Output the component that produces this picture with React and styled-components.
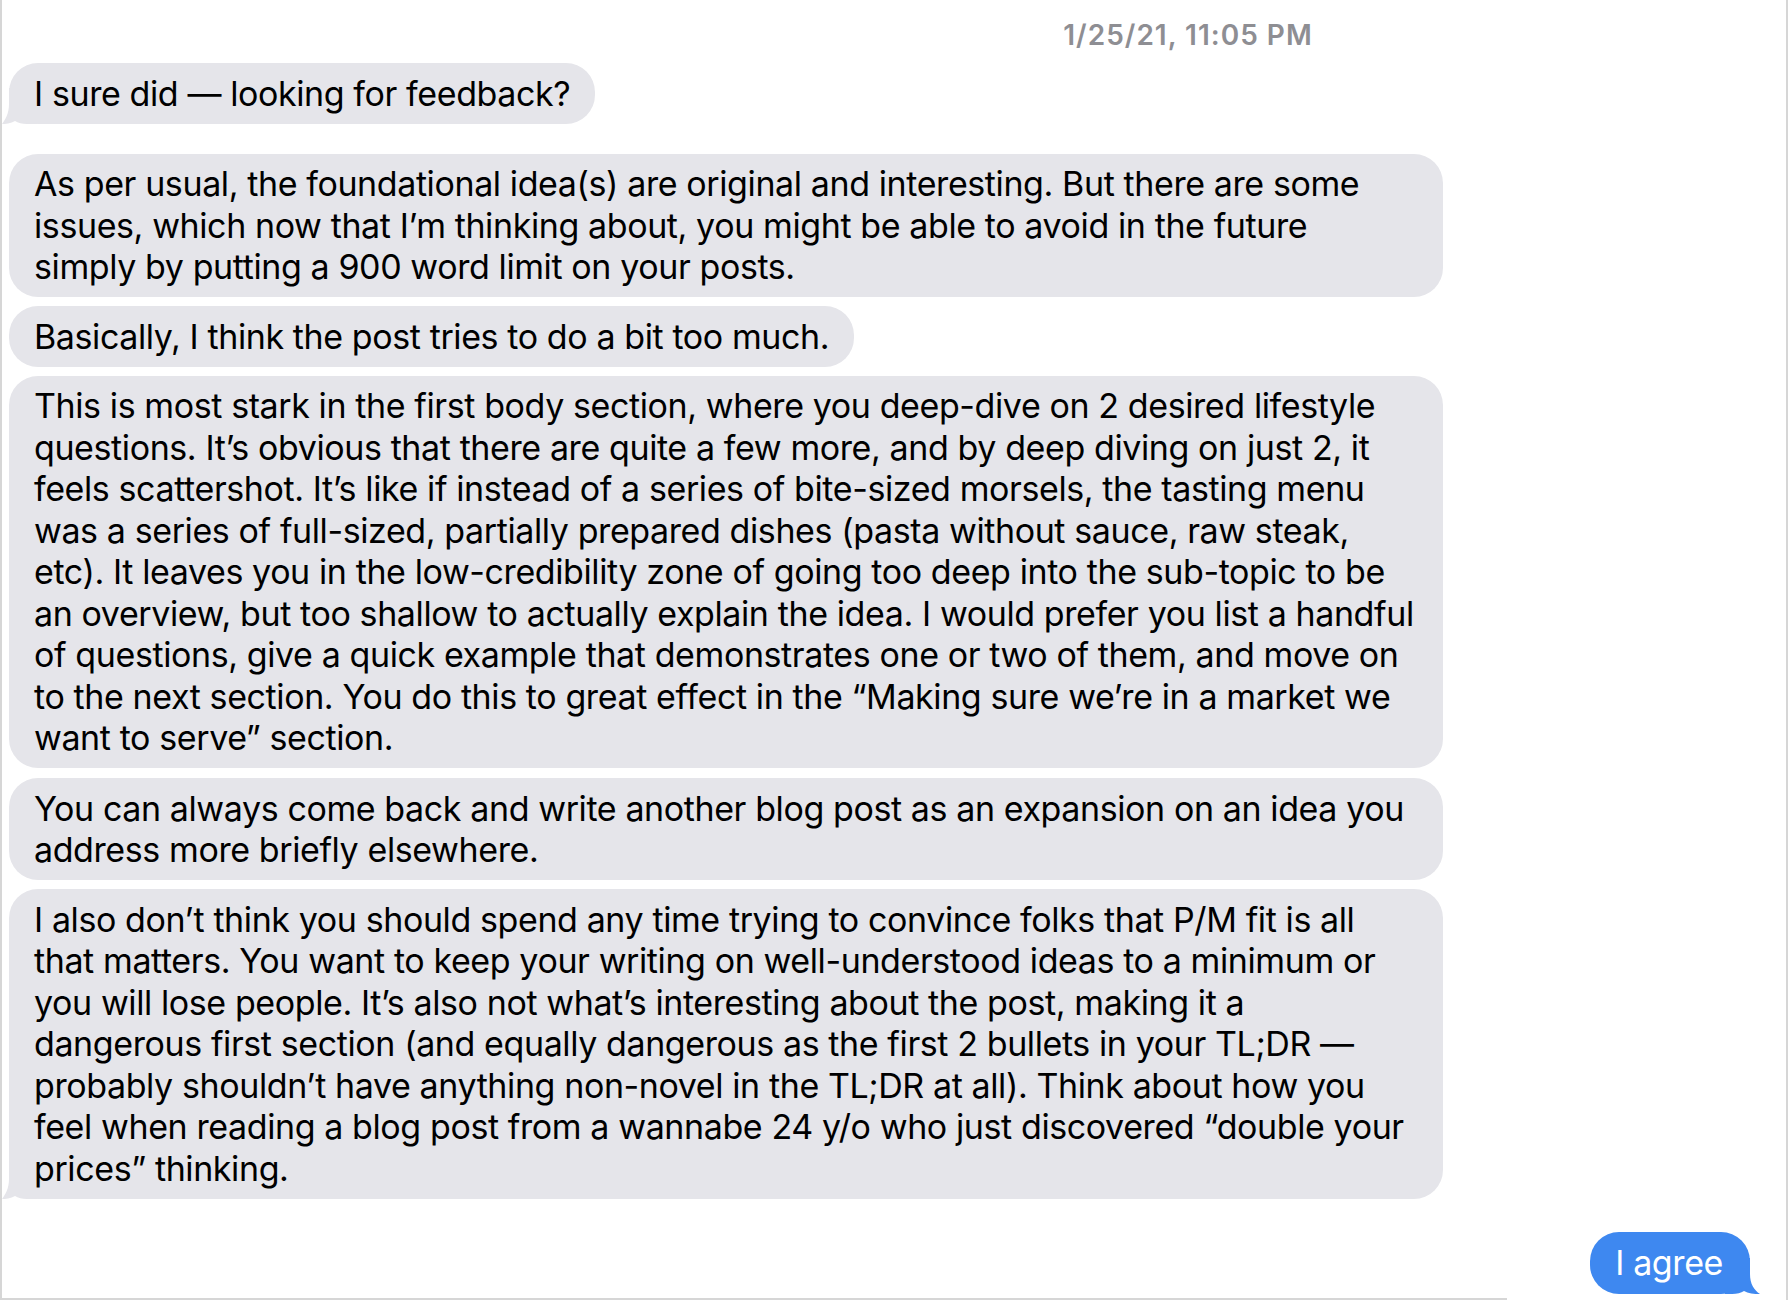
import React from 'react'
import styled, { createGlobalStyle } from 'styled-components'

const GlobalStyle = createGlobalStyle`
  html, body {
    margin: 0;
    padding: 0;
    background: #fff;
  }
  body {
    font-family: Inter, 'Liberation Sans', sans-serif;
  }
`

const messages = [
  { id: 1, from: 'them', gap: 12, tail: true, lines: ['I sure did — looking for feedback?'] },
  {
    id: 2, from: 'them', gap: 30, lines: [
      'As per usual, the foundational idea(s) are original and interesting. But there are some',
      'issues, which now that I’m thinking about, you might be able to avoid in the future',
      'simply by putting a 900 word limit on your posts.',
    ],
  },
  { id: 3, from: 'them', gap: 9, lines: ['Basically, I think the post tries to do a bit too much.'] },
  {
    id: 4, from: 'them', gap: 9, lines: [
      'This is most stark in the first body section, where you deep-dive on 2 desired lifestyle',
      'questions. It’s obvious that there are quite a few more, and by deep diving on just 2, it',
      'feels scattershot. It’s like if instead of a series of bite-sized morsels, the tasting menu',
      'was a series of full-sized, partially prepared dishes (pasta without sauce, raw steak,',
      'etc). It leaves you in the low-credibility zone of going too deep into the sub-topic to be',
      'an overview, but too shallow to actually explain the idea. I would prefer you list a handful',
      'of questions, give a quick example that demonstrates one or two of them, and move on',
      'to the next section. You do this to great effect in the “Making sure we’re in a market we',
      'want to serve” section.',
    ],
  },
  {
    id: 5, from: 'them', gap: 10, lines: [
      'You can always come back and write another blog post as an expansion on an idea you',
      'address more briefly elsewhere.',
    ],
  },
  {
    id: 6, from: 'them', gap: 9, tail: true, lines: [
      'I also don’t think you should spend any time trying to convince folks that P/M fit is all',
      'that matters. You want to keep your writing on well-understood ideas to a minimum or',
      'you will lose people. It’s also not what’s interesting about the post, making it a',
      'dangerous first section (and equally dangerous as the first 2 bullets in your TL;DR —',
      'probably shouldn’t have anything non-novel in the TL;DR at all). Think about how you',
      'feel when reading a blog post from a wannabe 24 y/o who just discovered “double your',
      'prices” thinking.',
    ],
  },
  { id: 7, from: 'me', gap: 33, tail: true, lines: ['I agree'] },
]

const App = () => (
  <>
    <GlobalStyle />
    <Frame>
      <Timestamp>1/25/21, 11:05 PM</Timestamp>
      <Thread>
        {messages.map(m => (
          <Bubble key={m.id} $me={m.from === 'me'} $gap={m.gap} $wrapped={m.lines.length > 1}>
            {m.lines.map((line, i) => <Line key={i}>{line}</Line>)}
            {m.tail && <Tail me={m.from === 'me'} />}
          </Bubble>
        ))}
      </Thread>
    </Frame>
  </>
)

const Tail = ({ me }) => {
  const reach = me ? 10 : 7
  const color = me ? '#3e88f0' : '#e5e5ea'
  const e = reach + 1
  return (
    <TailSvg $me={me} $reach={reach} viewBox="0 0 36 36" width="36" height="36">
      <path
        d={`M ${e} 0 L 36 0 L 36 36 L ${e + 18} 36 C ${e + 13} 36 ${e + 9} 35 ${e + 6} 33 C ${e + 2} 35.5 ${e - 4} 36 1 36 C ${e - 4} 32 ${e} 26 ${e} 16 Z`}
        fill={color}
      />
    </TailSvg>
  )
}

const Frame = styled.div`
  position: relative;
  box-sizing: border-box;
  width: 1788px;
  height: 1300px;
  padding: 19px 36px 0 7px;
  border-left: 2px solid #d6d6d6;
  border-right: 2px solid #d6d6d6;
  display: flex;
  flex-direction: column;
  overflow: hidden;

  &::after {
    content: '';
    position: absolute;
    left: 0;
    bottom: 0;
    width: 1505px;
    height: 2px;
    background: #d6d6d6;
  }
`

const Timestamp = styled.div`
  width: 480px;
  margin-left: 939px;
  text-align: center;
  font-size: 28px;
  line-height: 32px;
  font-weight: 600;
  letter-spacing: 1px;
  color: #8e8e93;
`

const Thread = styled.div`
  display: flex;
  flex-direction: column;
  align-items: flex-start;
`

const Bubble = styled.div`
  position: relative;
  box-sizing: border-box;
  width: ${p => (p.$wrapped ? '1434px' : 'fit-content')};
  max-width: 1434px;
  margin-top: ${p => p.$gap}px;
  padding: ${p => (p.$me ? '10.5px 27px 10.5px 25px' : '9.5px 25px')};
  border-radius: 29px;
  background: ${p => (p.$me ? '#3e88f0' : '#e5e5ea')};
  color: ${p => (p.$me ? '#fff' : '#000')};
  align-self: ${p => (p.$me ? 'flex-end' : 'flex-start')};
  font-size: 34px;
  line-height: 41.5px;
  letter-spacing: -0.4px;
`

const Line = styled.span`
  position: relative;
  z-index: 1;
  display: block;
  white-space: pre;
`

const TailSvg = styled.svg`
  position: absolute;
  bottom: 0;
  ${p => (p.$me ? `right: -${p.$reach + 1}px; transform: scaleX(-1);` : `left: -${p.$reach + 1}px;`)}
  display: block;
`

export default App
